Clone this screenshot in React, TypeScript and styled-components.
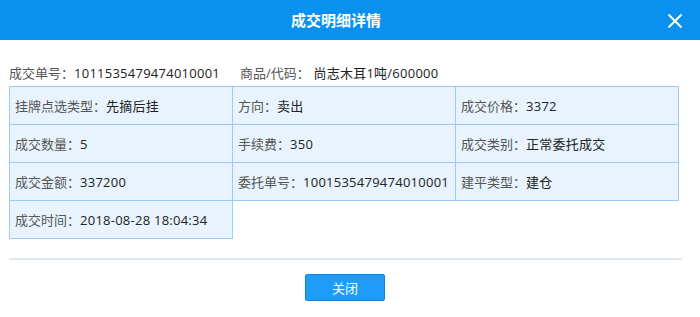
import React from "react";
import styled, { createGlobalStyle } from "styled-components";

const Global = createGlobalStyle`
  html, body { margin: 0; padding: 0; background: #fff; }
  body { font-family: "Open Sans", "Noto Sans CJK SC", "Microsoft YaHei", sans-serif; }
`;

const Dialog = styled.div`
  width: 700px;
  height: 317px;
  background: #fff;
  display: flex;
  flex-direction: column;
`;

const Header = styled.div`
  height: 40px;
  background: #0a91ef;
  display: flex;
  align-items: center;
  position: relative;
`;

const Title = styled.div`
  flex: 1;
  text-align: center;
  padding-right: 28px;
  color: #fff;
  font-family: "Noto Sans CJK SC", sans-serif;
  font-size: 15px;
  font-weight: bold;
  line-height: 40px;
`;

const Close = styled.button`
  position: absolute;
  right: 17px;
  top: 13px;
  width: 16px;
  height: 16px;
  padding: 0;
  border: 0;
  background: transparent;
  display: flex;
  cursor: pointer;
`;

const Body = styled.div`
  padding: 24px 9px 0 9px;
`;

const InfoLine = styled.div`
  display: flex;
  gap: 20px;
  font-size: 13px;
  line-height: 18px;
  height: 18px;
  margin-bottom: 4px;
`;

const Label = styled.span`
  color: #555;
`;

const Value = styled.span`
  color: #222;
  letter-spacing: 0.25px;
`;

const Grid = styled.div`
  display: grid;
  grid-template-columns: repeat(3, 223px);
  grid-auto-rows: 38px;
  width: 670px;
`;

const Cell = styled.div<{ $empty?: boolean }>`
  background: ${(p) => (p.$empty ? "transparent" : "#e8f3fd")};
  border: ${(p) => (p.$empty ? "0" : "1px solid #9ccbf5")};
  margin: 0 -1px -1px 0;
  display: flex;
  align-items: center;
  padding-left: 5px;
  font-size: 13px;
  white-space: nowrap;
`;

const Divider = styled.div`
  margin: 20px 18px 0 9px;
  height: 2px;
  background: #e0e8ef;
`;

const Footer = styled.div`
  display: flex;
  justify-content: center;
  padding: 14px 10px 0 0;
`;

const Button = styled.button`
  width: 80px;
  height: 27px;
  background: #1f9cf7;
  border: 1px solid #1286df;
  border-radius: 2px;
  color: #fff;
  font-family: "Noto Sans CJK SC", sans-serif;
  font-size: 13px;
  padding: 0;
  cursor: pointer;
`;

const cells: ([string, string] | null)[] = [
  ["挂牌点选类型：", "先摘后挂"],
  ["方向：", "卖出"],
  ["成交价格：", "3372"],
  ["成交数量：", "5"],
  ["手续费：", "350"],
  ["成交类别：", "正常委托成交"],
  ["成交金额：", "337200"],
  ["委托单号：", "1001535479474010001"],
  ["建平类型：", "建仓"],
  ["成交时间：", "2018-08-28 18:04:34"],
  null,
  null,
];

export default function App() {
  return (
    <Dialog>
      <Global />
      <Header>
        <Title>成交明细详情</Title>
        <Close aria-label="关闭">
          <svg width="16" height="16" viewBox="0 0 16 16">
            <path d="M1.5 1.5 L14.5 14.5 M14.5 1.5 L1.5 14.5" stroke="#fff" strokeWidth="2" fill="none" />
          </svg>
        </Close>
      </Header>
      <Body>
        <InfoLine>
          <span>
            <Label>成交单号：</Label>
            <Value>1011535479474010001</Value>
          </span>
          <span>
            <Label>商品/代码：</Label>
            <Value> 尚志木耳1吨/600000</Value>
          </span>
        </InfoLine>
        <Grid>
          {cells.map((c, i) =>
            c ? (
              <Cell key={i}>
                <Label>{c[0]}</Label>
                <Value>{c[1]}</Value>
              </Cell>
            ) : (
              <Cell key={i} $empty />
            )
          )}
        </Grid>
      </Body>
      <Divider />
      <Footer>
        <Button>关闭</Button>
      </Footer>
    </Dialog>
  );
}
